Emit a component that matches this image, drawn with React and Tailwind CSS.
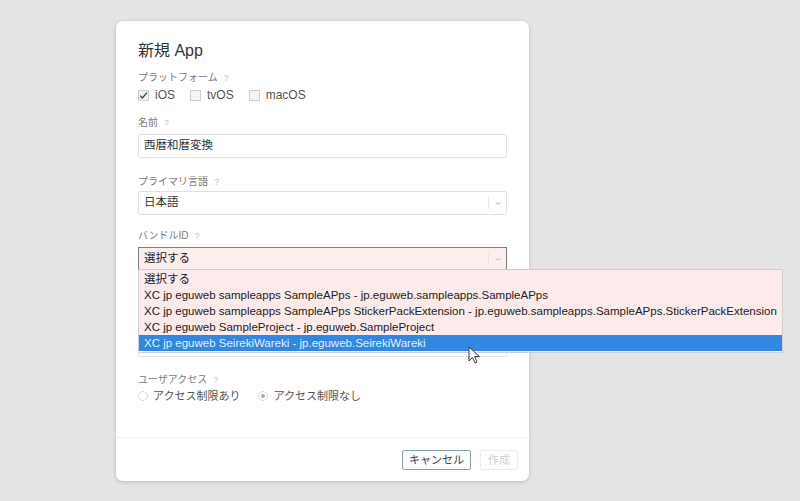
import React from "react";

const font = { fontFamily: '"Liberation Sans", "Noto Sans CJK JP", sans-serif' };

const Help = () => (
  <span className="ml-[6px] inline-block text-[9px] leading-none text-[#c4c4c4]">?</span>
);

const Label = ({ children, className = "" }) => (
  <div className={"flex items-center text-[10px] leading-[14px] text-[#7a7a7a] " + className}>
    {children}
    <Help />
  </div>
);

const Chevron = () => (
  <div className="flex h-full items-center">
    <div className="h-[12px] w-px bg-[#e6e6e6]" />
    <svg width="16" height="10" viewBox="0 0 16 10" className="ml-[1px]">
      <path d="M5.5 4 L8 6.5 L10.5 4" fill="none" stroke="#b5b5b5" strokeWidth="1" />
    </svg>
  </div>
);

const Check = ({ checked, label }) => (
  <label className="flex items-center gap-[6px]">
    <span className="flex h-[11px] w-[11px] items-center justify-center border border-[#cfcfcf] bg-[#f4f4f4]">
      {checked && (
        <svg width="9" height="9" viewBox="0 0 9 9">
          <path d="M1.2 4.6 L3.4 7 L7.9 1.6" fill="none" stroke="#444" strokeWidth="1.4" />
        </svg>
      )}
    </span>
    <span className="text-[12px] text-[#555]">{label}</span>
  </label>
);

const Radio = ({ checked, label }) => (
  <label className="flex items-center gap-[5px]">
    <span className="flex h-[10px] w-[10px] items-center justify-center rounded-full border border-[#d8d8d8] bg-white">
      {checked && <span className="h-[4px] w-[4px] rounded-full bg-[#aaa]" />}
    </span>
    <span className="text-[11px] text-[#555]">{label}</span>
  </label>
);

const options = [
  "XC jp eguweb sampleapps SampleAPps - jp.eguweb.sampleapps.SampleAPps",
  "XC jp eguweb sampleapps SampleAPps StickerPackExtension - jp.eguweb.sampleapps.SampleAPps.StickerPackExtension",
  "XC jp eguweb SampleProject - jp.eguweb.SampleProject",
];

export default function App() {
  return (
    <div className="min-h-[501px] w-[800px] overflow-hidden bg-[#e4e4e4] pl-[116px] pt-[21px]" style={font}>
      <div className="relative w-[413px] rounded-[7px] bg-white shadow-[0_1px_4px_rgba(0,0,0,0.18)]">
        <div className="px-[22px] pt-[20px] pb-[33px]">
          <h1 className="text-[16px] leading-[20px] text-[#333]">新規 App</h1>

          <Label className="mt-[10px]">プラットフォーム</Label>
          <div className="mt-[2px] flex h-[16px] items-center gap-[15px]">
            <Check checked label="iOS" />
            <Check label="tvOS" />
            <Check label="macOS" />
          </div>

          <Label className="mt-[13px]">名前</Label>
          <div className="mt-[4px] flex h-[24px] items-center rounded-[2px] border border-[#e2e2e2] px-[5px] text-[11.5px] text-[#333]">
            西暦和暦変換
          </div>

          <Label className="mt-[17px]">プライマリ言語</Label>
          <div className="mt-[2px] flex h-[24px] items-center justify-between rounded-[2px] border border-[#e2e2e2] pl-[5px] text-[11.5px] text-[#333]">
            日本語
            <Chevron />
          </div>

          <Label className="mt-[14px]">バンドルID</Label>
          <div className="relative mt-[4px]">
            <div className="flex h-[23px] items-center justify-between border border-[#7d7d7d] bg-[#fdeeee] pl-[5px] text-[11.5px] text-[#222]">
              選択する
              <Chevron />
            </div>
            <div className="absolute left-0 top-[22px] z-10 w-[645px] border border-[#cfcfcf] bg-[#fdeaea] py-[1px] text-[11.5px] leading-[16px] text-[#222]">
              <div className="flex h-[16px] items-center pl-[5px]">選択する</div>
              {options.map((o) => (
                <div key={o} className="flex h-[16px] items-center whitespace-nowrap pl-[5px]">
                  {o}
                </div>
              ))}
              <div className="flex h-[16px] items-center bg-[#3187e2] pl-[5px] text-[#e3efff]">
                XC jp eguweb SeirekiWareki - jp.eguweb.SeirekiWareki
              </div>
            </div>
            <svg width="14" height="20" viewBox="0 0 14 20" className="absolute left-[330px] top-[99px] z-20">
              <path d="M1 1 L1 15 L4.5 11.5 L7 17 L9 16 L6.6 10.6 L11.5 10.6 Z" fill="#fff" stroke="#333" strokeWidth="1" />
            </svg>
          </div>

          {/* field hidden under the open list */}
          <div className="mt-[63px] h-[24px] rounded-[2px] border border-[#e2e2e2]" />

          <Label className="mt-[16px]">ユーザアクセス</Label>
          <div className="mt-[1px] flex h-[16px] items-center gap-[18px]">
            <Radio label="アクセス制限あり" />
            <Radio checked label="アクセス制限なし" />
          </div>
        </div>

        <div className="flex justify-end gap-[9px] border-t border-[#efefef] pt-[12px] pb-[11px] pr-[11px]">
          <button className="h-[20px] rounded-[2px] border border-[#8aa0a8] bg-[#f9fbfc] px-[6px] text-[11px] leading-none text-[#444]">
            キャンセル
          </button>
          <button className="h-[20px] rounded-[2px] border border-[#ececec] bg-white px-[7px] text-[11px] leading-none text-[#d0d0d0]">
            作成
          </button>
        </div>
      </div>
    </div>
  );
}
